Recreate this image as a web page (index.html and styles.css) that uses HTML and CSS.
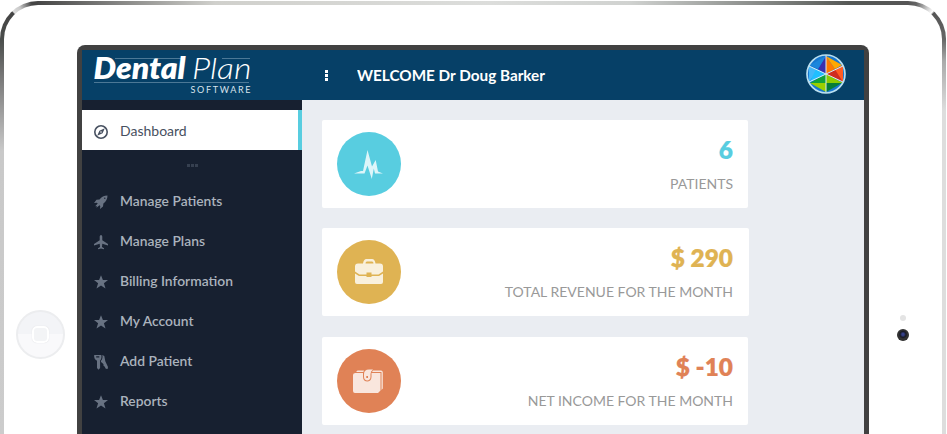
FILE: index.html
```html
<!DOCTYPE html>
<html lang="en">
<head>
<meta charset="utf-8">
<title>Dental Plan Software</title>
<link rel="stylesheet" href="styles.css">
</head>
<body>
<div class="tablet">
  <div class="bezel">
    <aside class="side-left">
      <div class="home"><span></span></div>
    </aside>
    <div class="screen">
      <header class="topbar">
        <svg class="logo" viewBox="0 0 160 50" width="160" height="50">
          <g stroke="#4c7896" stroke-width="1"><path d="M21 8.500H88M128 8.500H156M0 32.500H155"/></g>
          <g fill="#fff">
            <text class="logo-bold" x="-0.500" y="29" textLength="92" lengthAdjust="spacingAndGlyphs">Dental</text>
            <text class="logo-thin" x="98" y="29" textLength="59.500" lengthAdjust="spacingAndGlyphs">Plan</text>
            <text class="logo-sub" x="96.500" y="42.500" textLength="60">SOFTWARE</text>
          </g>
        </svg>
        <div class="dots"><i></i><i></i><i></i></div>
        <svg class="welcome" width="192" height="24"><text x="0" y="17" textLength="188" lengthAdjust="spacingAndGlyphs">WELCOME Dr Doug Barker</text></svg>
        <svg class="avatar" viewBox="0 0 40 40" width="40" height="40">
          <circle cx="20" cy="20" r="19" fill="#1777cf"/>
          <path fill="#3b2fae" d="M20 20V2L12 15Z"/><path fill="#1b86dc" d="M20 2L12 15L4 11Z"/>
          <path fill="#ff7a00" d="M20 20V2L29 15Z"/><path fill="#ffa800" d="M20 2L36 11L29 15Z"/>
          <path fill="#ff5b22" d="M37 11L20 20L37 28Z"/><path fill="#cf2c20" d="M20 20L29 15.500L37 28Z"/>
          <path fill="#12a23a" d="M20 20L4 29H20Z"/><path fill="#8ccc00" d="M20 20V29H37Z"/><path fill="#9bcf00" d="M4 29H20V38Z"/><path fill="#067d37" d="M20 29H36L20 38Z"/>
          <path fill="#42b8fa" d="M3 12L12 16L3 28Z"/><path fill="#20bfff" d="M10 15L20 20L4 28Z"/>
          <path stroke="#d9ecf5" d="M20 1V39M3 12L37 28M37 12L3 28" fill="none"/>
          <circle cx="20" cy="20" r="19" fill="none" stroke="#b9dff0" stroke-width="1.700"/>
        </svg>
      </header>
      <div class="body">
        <nav class="menu">
          <a class="item active"><svg viewBox="0 0 16 16"><circle cx="8" cy="8" r="6.200" fill="none" stroke="#475060" stroke-width="1.600"/><path fill="#475060" fill-rule="evenodd" d="M11.800 4.200L9.600 9.200L4.200 11.800L6.400 6.800ZM8 7.200A.8.8 0 1 0 8 8.800A.8.8 0 0 0 8 7.200Z"/></svg><span>Dashboard</span></a>
          <div class="more"><i></i><i></i><i></i></div>
          <a class="item"><svg viewBox="0 0 16 16"><path d="M14.500 1.500C11 1.500 8.500 3 6.500 5.500L3.500 5.800L1 9L4 8.700L4.700 9.400L2.200 12.300L3.800 12L3.500 13.800L6.500 11.300L7.300 12L7 15L10 12.500L10.400 9.500C13 7.500 14.500 5 14.500 1.500ZM11.800 3.500A.7.7 0 1 1 11.800 4.900A.7.7 0 0 1 11.800 3.500Z" fill-rule="evenodd"/></svg><span>Manage Patients</span></a>
          <a class="item"><svg viewBox="0 0 16 16"><path d="M8 1C8.900 1 9.300 2 9.300 3V6.200L15 10V11.500L9.300 9.800L9 13L11 14.300V15.300L8 14.600L5 15.300V14.300L7 13L6.700 9.800L1 11.500V10L6.700 6.200V3C6.700 2 7.100 1 8 1Z"/></svg><span>Manage Plans</span></a>
          <a class="item"><svg viewBox="0 0 16 16"><path d="M8 1.200L9.900 6.100H15L10.900 9.300L12.500 14.500L8 11.400L3.500 14.500L5.100 9.300L1 6.100H6.100Z"/></svg><span>Billing Information</span></a>
          <a class="item"><svg viewBox="0 0 16 16"><path d="M8 1.200L9.900 6.100H15L10.900 9.300L12.500 14.500L8 11.400L3.500 14.500L5.100 9.300L1 6.100H6.100Z"/></svg><span>My Account</span></a>
          <a class="item"><svg viewBox="0 0 16 16"><path fill-rule="evenodd" d="M1.200 1H8.300C8.800 3.500 8.300 5.300 7.100 6.400V14L5.500 15.700L4 14V6.800C1.800 5.800.8 3.500 1.200 1ZM3.200 2.200V3.400H6.300V2.200Z"/><path d="M9.300 1L11.300 2L12.300 7.300L15 13L14.600 15L12.800 14.800L11.600 12.500L10.500 11.800V10.300L9.300 9L8 8V6.800C9.500 5 9.800 3 9.300 1Z"/></svg><span>Add Patient</span></a>
          <a class="item"><svg viewBox="0 0 16 16"><path d="M8 1.200L9.900 6.100H15L10.900 9.300L12.500 14.500L8 11.400L3.500 14.500L5.100 9.300L1 6.100H6.100Z"/></svg><span>Reports</span></a>
        </nav>
        <main class="cards">
          <section class="card cyan">
            <svg viewBox="0 0 64 64"><path d="M17 41.500L24 39H26L30.500 18L35 34.500L38.700 28L41 39.500L46 41.500H38L36.800 36.500L34.800 47L30.500 33.500L27.500 41.500Z"/></svg>
            <div class="stat"><strong>6</strong><span>PATIENTS</span></div>
          </section>
          <section class="card gold">
            <svg viewBox="0 0 64 64"><path fill-rule="evenodd" d="M26 23.500C26.500 20.500 27.500 19 29.500 19H35C37 19 38 20.500 38.500 23.500H43Q46 23.500 46 26.500V31.500L41.500 34.500H34.500V32.500H29.500V34.500H22.500L18 31.500V26.500Q18 23.500 21 23.500ZM28.500 23.500H36.500Q36.500 21.500 35 21.500H30Q28.500 21.500 28.500 23.500Z"/><path d="M18 33.500L22 36H29.500V37H34.500V36H42L46 33.500V42Q46 44 44 44H20Q18 44 18 42Z"/></svg>
            <div class="stat"><strong>$ 290</strong><span>TOTAL REVENUE FOR THE MONTH</span></div>
          </section>
          <section class="card orange">
            <svg viewBox="0 0 64 64"><path fill-rule="evenodd" d="M18.500 24H26V28C26 34 34.500 34 34.500 28V24H43.500V41.500L41 44H18Q16 44 16 42V26Q16 24 18.500 24Z"/><path fill-rule="evenodd" d="M27 28V25Q27 20.500 32 20.500H36Q33.500 22 33.500 25V28C33.500 32.500 27 32.500 27 28ZM29.300 27V29H31V27Z"/><path d="M19 23L20.500 21.500H27L26.300 23ZM36 21.500H44Q45.800 21.500 45.800 23.500V39.500L44.500 41V23H35Z"/></svg>
            <div class="stat"><strong>$ -10</strong><span>NET INCOME FOR THE MONTH</span></div>
          </section>
        </main>
      </div>
    </div>
    <aside class="side-right">
      <i class="sensor"></i><i class="camera"></i>
    </aside>
  </div>
</div>
</body>
</html>
```
FILE: styles.css
```css
* { box-sizing: border-box; }
body { margin: 0; padding-top: 1px; background: #fff; font-family: Lato, "Liberation Sans", sans-serif; height: 434px; }
.tablet {
  width: 946px; height: 433px; padding: 4px 4px 0; border-radius: 38px 38px 0 0;
  background:
    conic-gradient(at 38px 38px, #4a4d4b 270deg, #444 316deg, #ddd 318deg, #c8c8c8 330deg, #444 350deg) 0 0 / 38px 38px no-repeat,
    conic-gradient(at 0 38px, #555 0deg, #666 14deg, #ccc 32deg, #fff 42deg, #555 45deg, #666 90deg) 100% 0 / 38px 38px no-repeat,
    linear-gradient(90deg, #444 35px, #d0d0cc 215px, #dcdddb 490px, #d0d2d0 630px, #555855 850px, #555 910px) 0 0 / 100% 5px no-repeat,
    linear-gradient(#4a4d4b 38px, #777 75px, #c9c9c9 150px, #ccc) 0 0 / 50% 100% no-repeat,
    linear-gradient(#666 38px, #aaa 60px, #ddd 110px, #ddd) 100% 0 / 50% 100% no-repeat;
}
.bezel { display: flex; height: 100%; overflow: hidden; background: #fff; border-radius: 34px 34px 0 0; }
.side-left { width: 73px; padding: 305px 0 0 12px; }
.home { display: grid; place-items: center; width: 49px; height: 49px; border: 2px solid #ecedef; border-radius: 50%; background: linear-gradient(#f3f4f7 50%, #f9f9fb 50%); }
.home span { width: 17px; height: 17px; border: 2px solid #fff; border-radius: 5px; box-shadow: 0 0 1px #d5d6da; background: #f3f4f6; }
.screen { width: 792px; margin-top: 40px; padding: 5px 5px 0; overflow: hidden; background: #414141; border-radius: 8px 8px 0 0; }
.topbar { display: flex; height: 50px; background: #064067; }
.logo { margin-left: 12px; overflow: visible; }
.logo text { font-family: Lato, sans-serif; }
.logo .logo-bold { font-size: 30px; font-weight: 800; font-style: italic; }
.logo .logo-thin { font-size: 30px; font-weight: 300; font-style: italic; }
.logo .logo-sub { font-size: 9px; fill: #d9e4ec; }
.dots { display: flex; flex-direction: column; gap: 1px; margin: 20px 0 0 71px; }
.dots i { width: 3px; height: 3px; background: #fff; }
.welcome { margin: 14px 0 0 29px; fill: #fff; font: 700 15px Lato, sans-serif; }
.avatar { margin: 4px 18px 0 auto; }
.body { display: flex; height: 340px; }
.menu { width: 220px; padding-top: 10px; background: #172030; }
.item { display: flex; align-items: center; height: 40px; padding: 0 0 1px 11px; color: #abb3bd; font-size: 13.85px; font-weight: 600; }
.item svg { width: 16px; height: 16px; margin: 3px 11px 0 0; fill: #687282; }
.item.active { padding-top: 1px; background: #fff; border-right: 4px solid #58cde0; color: #475060; font-size: 14px; font-weight: 400; }
.more { display: flex; gap: 1px; justify-content: center; align-items: center; height: 31px; }
.more i { width: 3px; height: 3px; background: #364050; }
.cards { flex: 1; padding: 20px; background: #eaedf2; }
.card { display: flex; justify-content: space-between; width: 426px; height: 88px; margin-bottom: 20px; padding: 12px 15px; background: #fff; border-radius: 2px; }
.card svg { width: 64px; height: 64px; border-radius: 50%; background: var(--tone); fill: #fff; fill-opacity: .8; }
.cyan { --tone: #58cde0; }
.gold { --tone: #dfb353; width: 427px; margin-bottom: 21px; padding-right: 16px; }
.orange { --tone: #e08256; margin-bottom: 0; }
.stat { display: flex; flex-direction: column; align-items: flex-end; white-space: nowrap; }
.stat strong { height: 36px; line-height: 36px; color: var(--tone); font-size: 24.4px; font-weight: 800; -webkit-text-stroke: .2px var(--tone); }
.stat span { margin-top: 7px; color: #999; font-size: 14px; line-height: 18px; }
.side-right { display: flex; flex-direction: column; align-items: center; flex: 1; padding: 310px 6px 0 0; }
.sensor { width: 6px; height: 6px; border-radius: 50%; background: #e4e4e4; }
.camera { width: 12px; height: 12px; margin-top: 8px; border-radius: 50%; background: radial-gradient(circle at 50% 45%, #34408a 0 1px, #171923 3px, #333 4.500px, #222); }
```
